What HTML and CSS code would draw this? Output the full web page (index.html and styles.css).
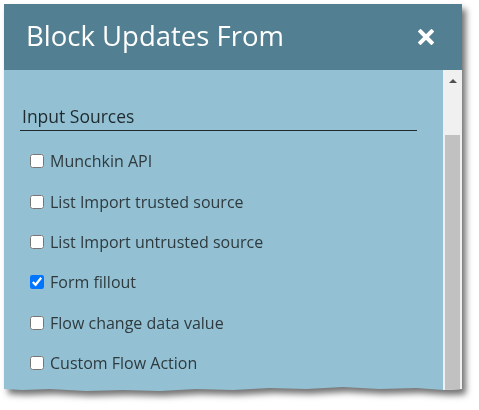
FILE: index.html
```html
<!DOCTYPE html>
<html>
<head>
<meta charset="utf-8">
<link rel="stylesheet" href="styles.css">
</head>
<body>
<div class="shadow">
  <div class="panel">
    <div class="header">
      <span class="title">Block Updates From</span>
      <svg class="close" width="16" height="16" viewBox="0 0 16 16"><path d="M2.5 2.5 L13.5 13.5 M13.5 2.5 L2.5 13.5" stroke="#fff" stroke-width="4" stroke-linecap="square"/></svg>
    </div>
    <div class="body">
      <div class="content">
        <div class="section">Input Sources</div>
        <label class="item"><input type="checkbox"><span>Munchkin API</span></label>
        <label class="item"><input type="checkbox"><span>List Import trusted source</span></label>
        <label class="item"><input type="checkbox"><span>List Import untrusted source</span></label>
        <label class="item"><input type="checkbox" checked><span>Form fillout</span></label>
        <label class="item"><input type="checkbox"><span>Flow change data value</span></label>
        <label class="item"><input type="checkbox"><span>Custom Flow Action</span></label>
      </div>
      <div class="scrollbar">
        <div class="arrow"></div>
        <div class="thumb"></div>
      </div>
    </div>
  </div>
</div>
</body>
</html>
```

FILE: styles.css
```css
html, body { margin: 0; padding: 0; background: #fff; }
body { width: 479px; height: 410px; overflow: hidden; font-family: "Open Sans", "Noto Sans", sans-serif; }
.shadow { padding: 4px; filter: drop-shadow(4px 5px 3px rgba(0,0,0,0.55)); }
.panel {
  width: 458px; height: 390px; display: flex; flex-direction: column;
  background: #93c1d3;
  clip-path: polygon(0 0, 100% 0, 100% 385px, 96% 386px, 90% 384px, 82% 385px, 74% 383px, 66% 385px, 58% 384px, 50% 386px, 42% 385px, 34% 387px, 26% 386px, 18% 387px, 10% 385px, 4% 386px, 0 385px);
}
.header {
  height: 66px; flex: none; background: #527f91; display: flex; align-items: center;
  justify-content: space-between; padding: 0 28px 0 22px;
}
.title { color: #fff; font-size: 27.5px; line-height: 1; position: relative; top: -1px; }
.close { display: block; }
.body { flex: 1; display: flex; min-height: 0; }
.content { flex: 1; padding: 34px 26px 0 16px; }
.section {
  font-size: 17.5px; color: #1e2a2e; padding-left: 2px; line-height: 24px;
  border-bottom: 1.5px solid #1e2a2e; padding-bottom: 2px; margin-bottom: 10px;
}
.item { display: flex; align-items: center; height: 40.4px; padding-left: 10px; font-size: 16px; color: #2e3a3e; }
.item input { margin: 0 6px 0 0; width: 14px; height: 14px; }
.scrollbar { width: 19px; flex: none; background: #f0f0f0; display: flex; flex-direction: column; align-items: center; }
.arrow { margin-top: 9px; width: 0; height: 0; border-left: 4px solid transparent; border-right: 4px solid transparent; border-bottom: 4px solid #505050; }
.thumb { margin-top: 52px; width: 15px; flex: 1; background: #c1c1c1; }
```
